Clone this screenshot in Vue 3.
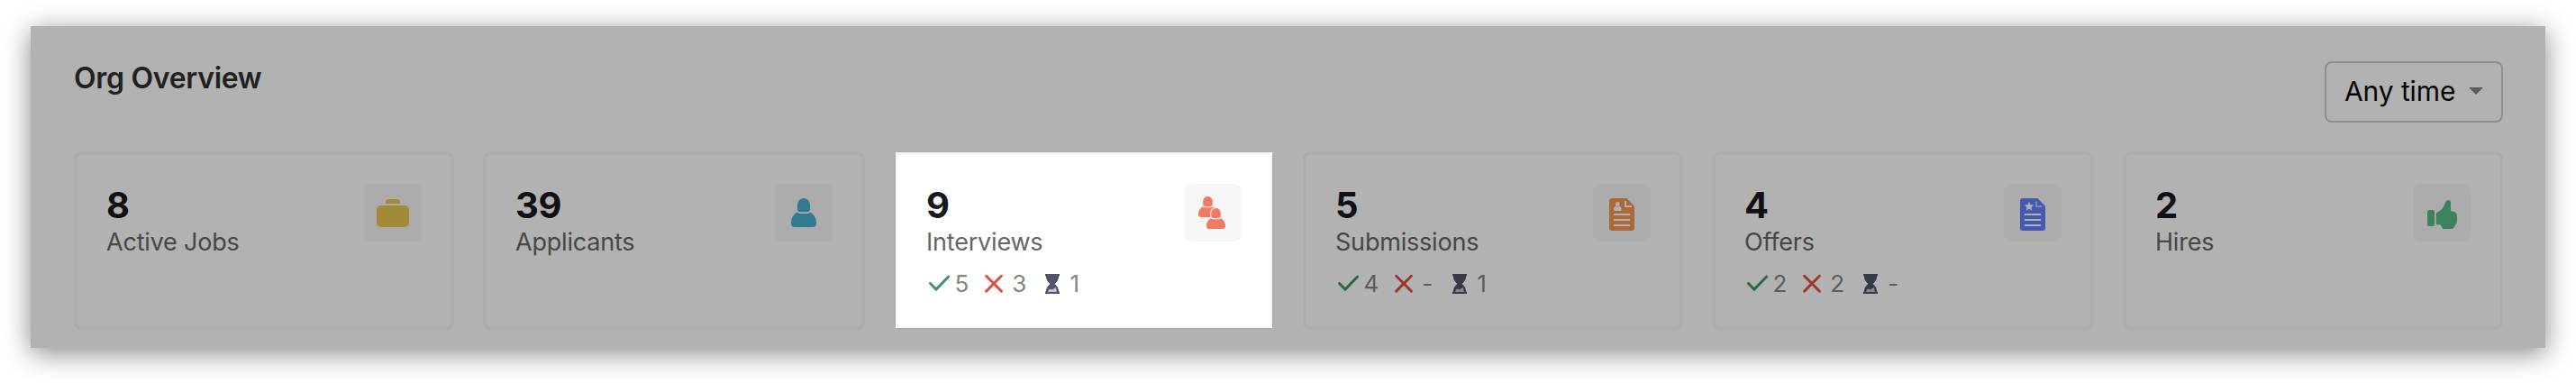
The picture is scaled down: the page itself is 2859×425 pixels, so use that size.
<template>
  <div class="page">
    <section class="panel">
      <header class="header">
        <h2 class="title">Org Overview</h2>
        <button type="button" class="range">
          <span>Any time</span>
          <svg class="caret" viewBox="0 0 16 8"><path d="M0 0h16L8 8z" /></svg>
        </button>
      </header>

      <div class="cards">
        <div v-for="card in cards" :key="card.label" class="card">
          <div class="card-text">
            <div class="total">{{ card.total }}</div>
            <div class="label">{{ card.label }}</div>
            <div v-if="card.stats" class="stats">
              <span class="stat">
                <svg class="stat-icon" viewBox="0 0 28 24">
                  <path class="check" d="M4.5 12.5L11 19L24.7 5" />
                </svg>
                <span class="count">{{ card.stats[0] }}</span>
              </span>
              <span class="stat">
                <svg class="stat-icon" viewBox="0 0 28 24">
                  <path class="cross" d="M4.6 4.3L21.4 21.1M21.4 4.3L4.6 21.1" />
                </svg>
                <span class="count">{{ card.stats[1] }}</span>
              </span>
              <span class="stat">
                <svg class="stat-icon" viewBox="0 0 28 24">
                  <path class="glass" d="M8 21.500L9.500 17L14 13.500L18.500 17L20 21.500z" />
                  <path class="sand" d="M6 2h16v2.200h-.8C21 8 19.200 11 16.600 13C19.200 15 21 18 21.200 21.800h.8V24H6v-2.200h.8C7 18 8.800 15 11.400 13C8.800 11 7 8 6.800 4.200H6zM9.200 21.800h9.600c-.1-1.900-.7-3.600-1.600-5c-1.200 2.600-3.600 2.600-6.400 2c-.9.900-1.500 1.900-1.600 3z" fill-rule="evenodd" />
                </svg>
                <span class="count">{{ card.stats[2] }}</span>
              </span>
            </div>
          </div>

          <div class="badge">
            <svg v-if="card.icon === 'case'" class="yellow" viewBox="0 0 64 64">
              <path d="M24 22v-1.500q0-3.500 3.500-3.500h9q3.500 0 3.500 3.500V22z" />
              <rect x="14" y="24" width="36" height="24" rx="5" />
            </svg>
            <svg v-else-if="card.icon === 'person'" class="teal" viewBox="0 0 64 64">
              <path :d="head" />
              <path :d="body" />
            </svg>
            <svg v-else-if="card.icon === 'people'" class="coral" viewBox="0 0 64 64">
              <g transform="translate(2.500 2.500) scale(.75 .72)">
                <path :d="head" />
                <path :d="body" />
              </g>
              <g transform="translate(11.500 15.500) scale(.75 .72)">
                <path class="halo" :d="head" />
                <path class="halo" :d="body" />
                <path :d="head" />
                <path :d="body" />
              </g>
            </svg>
            <svg v-else-if="card.icon === 'resume'" class="orange" viewBox="0 0 64 64">
              <path :d="sheet" />
              <path class="line" d="M36 19v6h7M23 34h18M23 40h18M23 46h18" />
              <g class="white" transform="translate(17.400 15) scale(.31)">
                <path :d="head" />
                <path :d="body" />
              </g>
            </svg>
            <svg v-else-if="card.icon === 'offer'" class="blue" viewBox="0 0 64 64">
              <path :d="sheet" />
              <path class="line" d="M23 34h18M23 40h18M23 46h18" />
              <path class="line faint" d="M36 19.500v5.500h6" />
              <path class="white" d="M28 19.800l1.500 3.500 3.700.3-2.800 2.500.9 3.700-3.300-2-3.300 2 .9-3.700-2.800-2.500 3.700-.3z" />
            </svg>
            <svg v-else class="green" viewBox="0 0 64 64">
              <rect x="16" y="29" width="8" height="18" rx="2.500" />
              <path d="M25.700 33q0-.8.800-1.200C31.500 29.500 34 27 35.500 21.500Q36.500 18 39.500 18Q42 18 42 20v10.200C46.500 30.300 49 32.500 49 36v3.500C49 44 47 47.500 43.500 50H33.500Q31.800 48.500 30.800 45.500H27.200Q25.700 45.500 25.700 44z" />
            </svg>
          </div>
        </div>
      </div>

      <div class="spotlight"></div>
    </section>
  </div>
</template>

<script setup>
const head = 'M25 23a7 7 0 0 1 14 0v5q0 3.300-3.300 3.300h-7.400q-3.300 0-3.300-3.300z'
const body = 'M24.300 31.600C20 34.500 18 38.500 18 43.500Q18 48 22 48H42Q46 48 46 43.500C46 38.500 44 34.500 39.700 31.600Q38.500 32.900 36 32.900H28Q25.500 32.900 24.300 31.600z'
const sheet = 'M21 16H37.300L46 24.700V49Q46 52 43 52H21Q18 52 18 49V19Q18 16 21 16z'

// stats: accepted, rejected, pending
const cards = [
  { total: 8, label: 'Active Jobs', icon: 'case' },
  { total: 39, label: 'Applicants', icon: 'person' },
  { total: 9, label: 'Interviews', icon: 'people', stats: ['5', '3', '1'] },
  { total: 5, label: 'Submissions', icon: 'resume', stats: ['4', '-', '1'] },
  { total: 4, label: 'Offers', icon: 'offer', stats: ['2', '2', '-'] },
  { total: 2, label: 'Hires', icon: 'thumb' }
]
</script>

<style>
body {
  margin: 0;
  background: #fff;
}
</style>

<style scoped>
.page {
  box-sizing: border-box;
  height: 425px;
  padding: 29px 34px 39px;
  background: #fff;
  font-family: Inter, 'Liberation Sans', sans-serif;
  overflow: hidden;
}
.panel {
  position: relative;
  box-sizing: border-box;
  height: 357px;
  padding: 39px 47px 20px 48px;
  background: #fff;
  box-shadow: 0 6px 28px rgba(0, 0, 0, 0.47);
}
.header {
  display: flex;
  justify-content: space-between;
  align-items: flex-start;
  height: 68px;
  margin-bottom: 32px;
}
.title {
  margin: 0;
  font-size: 32px;
  font-weight: 600;
  line-height: 37px;
  letter-spacing: -0.3px;
  color: #303030;
}
.range {
  display: flex;
  align-items: center;
  justify-content: space-between;
  box-sizing: border-box;
  width: 198px;
  height: 68px;
  padding: 0 20px 2px;
  border: 2px solid #ccc;
  border-radius: 8px;
  background: #fff;
  color: #0a0a0a;
  font-family: inherit;
  font-size: 30px;
  letter-spacing: -0.1px;
}
.caret {
  width: 16px;
  height: 8px;
  fill: #808080;
}
.cards {
  display: grid;
  grid-template-columns: 422fr 424fr 422fr 422fr 424fr 422fr;
  column-gap: 32px;
}
.card {
  display: flex;
  justify-content: space-between;
  align-items: flex-start;
  box-sizing: border-box;
  height: 198px;
  padding: 32px;
  border: 4px solid #f6f6f6;
  border-radius: 8px;
}
.total {
  font-size: 40px;
  font-weight: 700;
  line-height: 47px;
  letter-spacing: -0.2px;
  color: #181822;
}
.label {
  font-size: 27px;
  line-height: 35px;
  letter-spacing: -0.2px;
  color: #666;
}
.stats {
  display: flex;
  gap: 14.5px;
  margin-top: 13px;
}
.stat {
  display: flex;
  align-items: flex-start;
  gap: 5.5px;
}
.stat:first-child {
  gap: 3.5px;
}
.stat-icon {
  width: 28px;
  height: 24px;
  margin-top: 3px;
  fill: none;
  stroke-width: 3;
  stroke-linecap: round;
}
.check {
  stroke: #419169;
}
.cross {
  stroke: #dd5044;
}
.glass {
  fill: #c3c7d0;
}
.sand {
  fill: #505569;
}
.count {
  min-width: 13px;
  font-size: 26px;
  line-height: 31px;
  color: #848484;
}
.badge {
  width: 64px;
  height: 64px;
  border-radius: 8px;
  background: #f6f6f6;
}
.badge svg {
  display: block;
}
.yellow {
  fill: #e9c750;
}
.teal {
  fill: #49b1d3;
}
.coral {
  fill: #f27a65;
}
.orange {
  fill: #f39754;
}
.blue {
  fill: #6181fb;
}
.green {
  fill: #57bb88;
}
.white {
  fill: #fff;
}
.halo {
  stroke: #f6f6f6;
  stroke-width: 3;
}
.line {
  fill: none;
  stroke: #fff;
  stroke-width: 2;
}
.faint {
  opacity: 0.5;
}
/* dims the panel except for the highlighted card */
.spotlight {
  position: absolute;
  inset: 0;
  background: rgba(0, 0, 0, 0.3);
  clip-path: polygon(evenodd, 0 0, 100% 0, 100% 100%, 0 100%, 0 0, 960px 140px, 1378px 140px, 1378px 335px, 960px 335px, 960px 140px);
}
</style>
